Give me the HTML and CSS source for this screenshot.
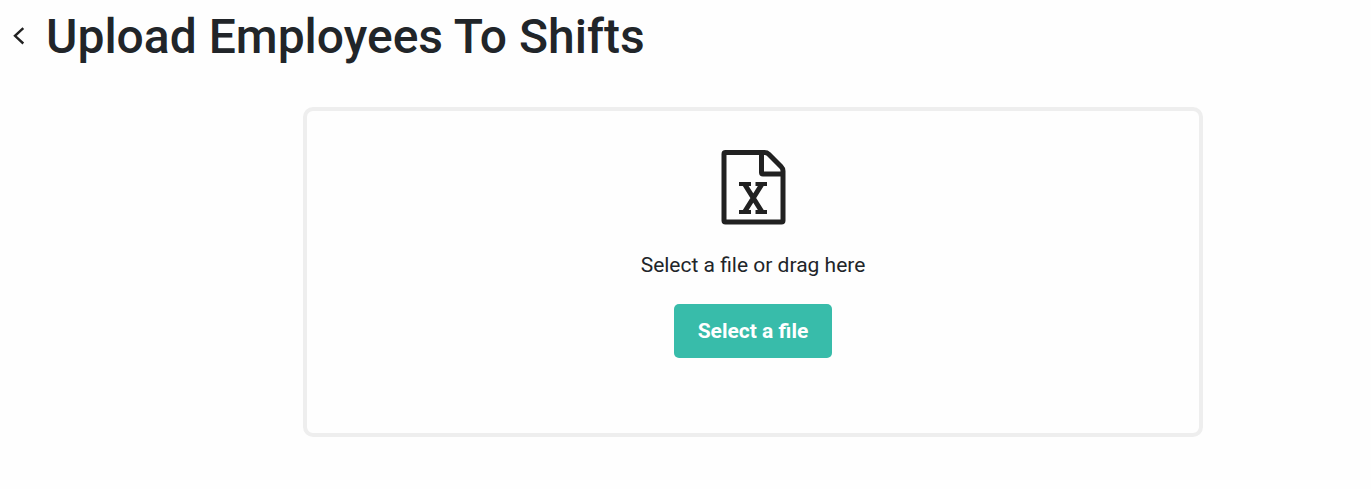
FILE: index.html
```html
<!DOCTYPE html>
<html lang="en">
<head>
<meta charset="utf-8">
<meta name="viewport" content="width=device-width, initial-scale=1">
<title>Upload Employees To Shifts</title>
<link rel="stylesheet" href="styles.css">
</head>
<body>
<header class="page-header">
  <a class="back" href="#" aria-label="Back">
    <svg class="back-icon" viewBox="0 0 14 20" aria-hidden="true"><path d="M11.300 1.100 3 8.800l8.300 7.700"/></svg>
  </a>
  <h1 class="title">Upload Employees To Shifts</h1>
</header>
<main class="content">
  <section class="dropzone">
    <svg class="file-icon" viewBox="0 0 66 76" aria-hidden="true">
      <g class="outline">
        <path d="M5.500 3.500h39q2.500 0 4.300 1.700L61 17.500Q63 19.500 63 22v49.500q0 1.500-1.500 1.500h-56q-1.500 0-1.500-1.500V5q0-1.500 1.500-1.500z"/>
        <path d="M41.500 4v19.500q0 1.500 1.500 1.500h20"/>
      </g>
      <g class="mark">
        <path d="M24.500 35 42 63M42 35 24.500 63"/>
        <path class="serif" d="M19 35h12M35.500 35H47M19 63h12M35.500 63H47"/>
      </g>
    </svg>
    <p class="hint">Select a file or drag here</p>
    <button class="select-button" type="button">Select a file</button>
  </section>
</main>
</body>
</html>
```
FILE: styles.css
```css
* {
  box-sizing: border-box;
}

body {
  margin: 0;
  background: #fefefe;
  color: #212529;
  font-family: Roboto, "Liberation Sans", sans-serif;
}

.page-header {
  display: flex;
  align-items: center;
  gap: 20px;
  padding: 9px 12px 0;
}

.back {
  display: flex;
  color: #212121;
}

.back-icon {
  width: 14px;
  height: 20px;
  fill: none;
  stroke: currentColor;
  stroke-width: 2.4;
}

.title {
  margin: 0;
  font-size: 48px;
  font-weight: 500;
  line-height: 56px;
}

.content {
  display: flex;
  justify-content: center;
  padding: 42px 0 52px 135px;
}

.dropzone {
  display: flex;
  flex-direction: column;
  align-items: center;
  width: 100%;
  max-width: 900px;
  padding: 38px 24px 75px;
  border: 4px solid #eee;
  border-radius: 10px;
}

.file-icon {
  width: 66px;
  height: 76px;
}

.outline {
  fill: none;
  stroke: #212121;
  stroke-width: 5;
}

.mark {
  fill: none;
  stroke: #212121;
  stroke-width: 5;
}

.serif {
  stroke-width: 4;
}

.hint {
  margin: 25px 0 24px;
  font-size: 21px;
  line-height: 30px;
}

.select-button {
  padding: 12px 24px;
  border: 0;
  border-radius: 5px;
  background: #38bcaa;
  color: #fff;
  font-family: inherit;
  font-size: 21px;
  font-weight: 700;
  line-height: 30px;
}
```
